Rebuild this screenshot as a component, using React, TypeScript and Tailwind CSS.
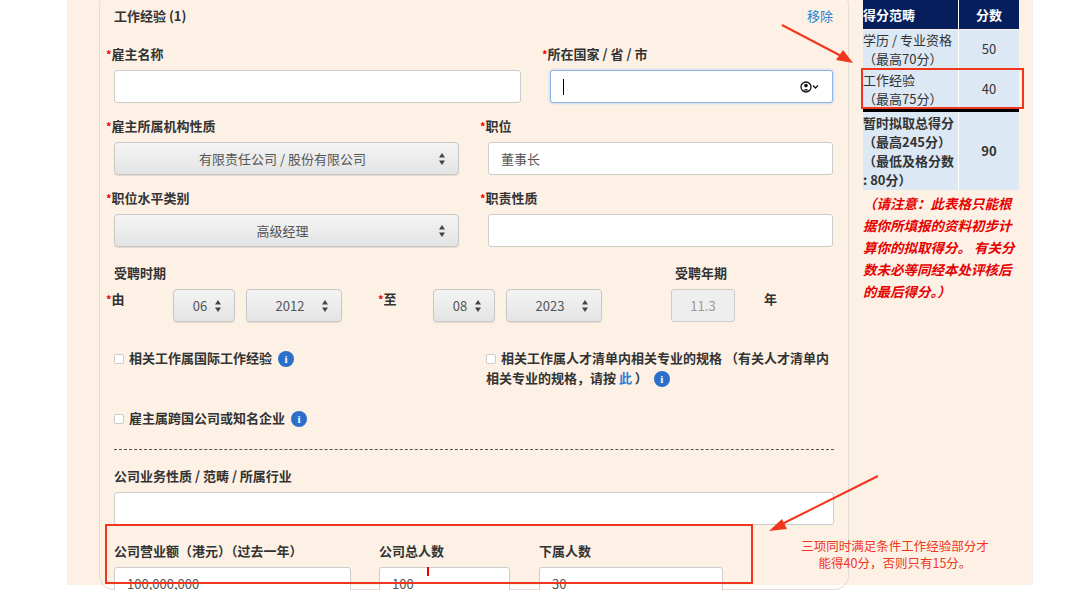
import React from "react";

const F = { fontFamily: '"Noto Sans CJK SC", "Liberation Sans", sans-serif' };

function Label({ req = true, children, className = "" }: { req?: boolean; children: React.ReactNode; className?: string }) {
  return (
    <div className={"text-[13px] font-bold text-[#333] leading-[18px] h-[18px] " + className}>
      {req && <span className="text-[#e00] text-[11px] align-top">*</span>}
      {children}
    </div>
  );
}

function Input({ w, value = "", className = "" }: { w: string; value?: string; className?: string }) {
  return (
    <div className={`h-[33px] bg-white border border-[#ccc] rounded-[3px] flex items-center px-3 text-[13px] leading-[18px] text-[#555] ${w} ${className}`}>
      {value}
    </div>
  );
}

function Arrows() {
  return (
    <svg width="8" height="14" viewBox="0 0 8 14" className="shrink-0">
      <path d="M4 1 L7 5.5 H1 Z M4 13 L7 8.5 H1 Z" fill="#444" />
    </svg>
  );
}

function Select({ w, value }: { w: string; value: string }) {
  return (
    <div className={`h-[33px] border border-[#c8c8c8] rounded-[4px] flex items-center px-3 text-[13px] leading-[18px] text-[#555] bg-gradient-to-b from-[#f4f4f4] to-[#e4e4e4] shadow-[0_1px_1px_rgba(0,0,0,0.1)] ${w}`}>
      <span className="flex-1 text-center">{value}</span>
      <Arrows />
    </div>
  );
}

function Info() {
  return (
    <span className="inline-flex w-[16px] h-[16px] rounded-full bg-[#2a6fc9] text-white text-[11px] font-bold items-center justify-center ml-[6px] align-middle" style={{ fontFamily: "Liberation Serif, serif" }}>i</span>
  );
}

function Check() {
  return <span className="inline-block w-[10px] h-[10px] border border-[#ccc] bg-white rounded-[2px] mr-[5px] align-middle" />;
}

export default function App() {
  return (
    <div className="w-[1080px] h-[590px] bg-white relative overflow-hidden" style={F}>
      <div className="ml-[67px] w-[966px] h-[585px] bg-[#fdf1e6] border-x border-[#eee] flex">
        {/* card */}
        <div className="ml-[31px] w-[750px] h-[600px] -mt-[10px] border border-[#e2ddd6] rounded-[14px] px-[14px] pt-[16px]">
          <div className="flex justify-between items-center h-[18px] leading-[18px]">
            <div className="text-[13px] font-bold text-[#333]">工作经验 (1)</div>
            <div className="text-[13px] text-[#2a7fd4] mr-[1px]">移除</div>
          </div>
          <div className="flex mt-[20px]">
            <div className="w-[436px]">
              <Label className="-ml-[8px]">雇主名称</Label>
              <Input w="w-[407px]" className="mt-[7px]" />
            </div>
            <div>
              <Label className="-ml-[8px]">所在国家 / 省 / 市</Label>
              <div className="mt-[7px] h-[33px] w-[283px] bg-white border border-[#8db4e6] rounded-[3px] shadow-[0_0_3px_#9cc2ee] flex items-center px-3">
                <span className="w-[1px] h-[16px] bg-black" />
                <span className="flex-1" />
                <svg width="20" height="12" viewBox="0 0 20 12">
                  <circle cx="6" cy="6" r="5" fill="none" stroke="#111" strokeWidth="1.3" />
                  <circle cx="6" cy="4.6" r="1.8" fill="#111" />
                  <path d="M2.8 9.5 Q6 6.5 9.2 9.5" fill="#111" />
                  <path d="M13 4.5 L15.5 7 L18 4.5" fill="none" stroke="#111" strokeWidth="1.3" />
                </svg>
              </div>
            </div>
          </div>
          <div className="flex mt-[14px]">
            <div className="w-[374px]">
              <Label className="-ml-[8px]">雇主所属机构性质</Label>
              <div className="mt-[7px]"><Select w="w-[345px]" value="有限责任公司 / 股份有限公司" /></div>
            </div>
            <div>
              <Label className="-ml-[8px]">职位</Label>
              <Input w="w-[345px]" value="董事长" className="mt-[7px]" />
            </div>
          </div>
          <div className="flex mt-[14px]">
            <div className="w-[374px]">
              <Label className="-ml-[8px]">职位水平类别</Label>
              <div className="mt-[7px]"><Select w="w-[345px]" value="高级经理" /></div>
            </div>
            <div>
              <Label className="-ml-[8px]">职责性质</Label>
              <Input w="w-[345px]" className="mt-[7px]" />
            </div>
          </div>
          <div className="flex mt-[17px]">
            <Label req={false} className="w-[561px]">受聘时期</Label>
            <Label req={false}>受聘年期</Label>
          </div>
          <div className="flex mt-[7px] items-start">
            <Label className="-ml-[8px] w-[67px] mt-[1px]">由</Label>
            <Select w="w-[62px] mr-[11px]" value="06" />
            <Select w="w-[96px] mr-[44px]" value="2012" />
            <Label className="-ml-[8px] w-[55px] mt-[1px]">至</Label>
            <Select w="w-[62px] mr-[11px]" value="08" />
            <Select w="w-[96px] mr-[69px]" value="2023" />
            <div className="w-[64px] h-[33px] bg-[#eee] border border-[#ccc] rounded-[3px] text-[13px] text-[#999] flex items-center justify-center">11.3</div>
            <Label req={false} className="ml-[29px] mt-[1px]">年</Label>
          </div>
          <div className="flex mt-[26px] leading-[20px]">
            <div className="w-[374px] text-[13px] font-bold text-[#333]"><Check />相关工作属国际工作经验<Info /></div>
            <div className="w-[350px] text-[13px] font-bold text-[#333]"><Check />相关工作属人才清单内相关专业的规格 （有关人才清单内相关专业的规格，请按 <span className="text-[#2a7fd4]">此</span> ）<Info /></div>
          </div>
          <div className="text-[13px] font-bold text-[#333] mt-[20px] leading-[20px]"><Check />雇主属跨国公司或知名企业<Info /></div>
          <div className="mt-[21px] border-t border-dashed border-[#555] w-[720px]" />
          <Label req={false} className="mt-[17px]">公司业务性质 / 范畴 / 所属行业</Label>
          <Input w="w-[720px]" className="mt-[7px]" />
          <div className="flex mt-[17px]">
            <div className="w-[265px]">
              <Label req={false}>公司营业额（港元）（过去一年）</Label>
              <Input w="w-[237px]" value="100,000,000" className="mt-[7px]" />
            </div>
            <div className="w-[160px]">
              <Label req={false}>公司总人数</Label>
              <Input w="w-[131px]" value="100" className="mt-[7px]" />
            </div>
            <div>
              <Label req={false}>下属人数</Label>
              <Input w="w-[184px]" value="30" className="mt-[7px]" />
            </div>
          </div>
        </div>
        {/* table */}
        <div className="ml-[14px] w-[156px]">
          <div className="flex h-[29px] bg-[#061f5c] text-white text-[13px] font-bold">
            <div className="w-[96px] border-r border-white flex items-center">得分范畴</div>
            <div className="flex-1 flex items-center justify-center">分数</div>
          </div>
          <div className="flex mt-[1px] bg-[#dce8f4] text-[13px] text-[#333] h-[38px]">
            <div className="w-[96px] border-r border-white leading-[19px]">学历 / 专业资格<br />（最高70分）</div>
            <div className="flex-1 flex items-center justify-center">50</div>
          </div>
          <div className="flex mt-[2px] bg-[#dce8f4] text-[13px] text-[#333] h-[38px]">
            <div className="w-[96px] border-r border-white leading-[19px]">工作经验<br />（最高75分）</div>
            <div className="flex-1 flex items-center justify-center">40</div>
          </div>
          <div className="h-[3px] bg-black mt-[1px]" />
          <div className="flex bg-[#dce8f4] text-[13px] text-[#333] font-bold h-[78px]">
            <div className="w-[96px] border-r border-white leading-[19px] pt-[1px]">暂时拟取总得分<br />（最高245分）<br />（最低及格分数<br />: 80分）</div>
            <div className="flex-1 flex items-center justify-center">90</div>
          </div>
          <div className="text-[#e60000] text-[13.5px] font-bold italic leading-[22px] mt-[2px] w-[152px]">（请注意：此表格只能根据你所填报的资料初步计算你的拟取得分。 有关分数未必等同经本处评核后的最后得分。）</div>
        </div>
      </div>

      {/* annotations */}
      <div className="absolute left-[861px] top-[68px] w-[163px] h-[41px] border-2 border-[#f0361c]" />
      <div className="absolute left-[105px] top-[524px] w-[648px] h-[60px] border-2 border-[#f0361c]" />
      <div className="absolute left-[427px] top-[567px] w-[2px] h-[9px] bg-[#e00]" />
      <svg className="absolute left-0 top-0 pointer-events-none" width="1080" height="590">
        <line x1="782" y1="25" x2="845" y2="58" stroke="#f0361c" strokeWidth="2" />
        <path d="M853 63 L836 60 L843 50 Z" fill="#f0361c" />
        <line x1="878" y1="476" x2="778" y2="526" stroke="#f0361c" strokeWidth="2" />
        <path d="M769 531 L782 519 L787 529 Z" fill="#f0361c" />
      </svg>
      <div className="absolute left-[780px] top-[537px] w-[230px] text-center text-[12.5px] leading-[17px] text-[#f0361c]">三项同时满足条件工作经验部分才<br />能得40分，否则只有15分。</div>
    </div>
  );
}
